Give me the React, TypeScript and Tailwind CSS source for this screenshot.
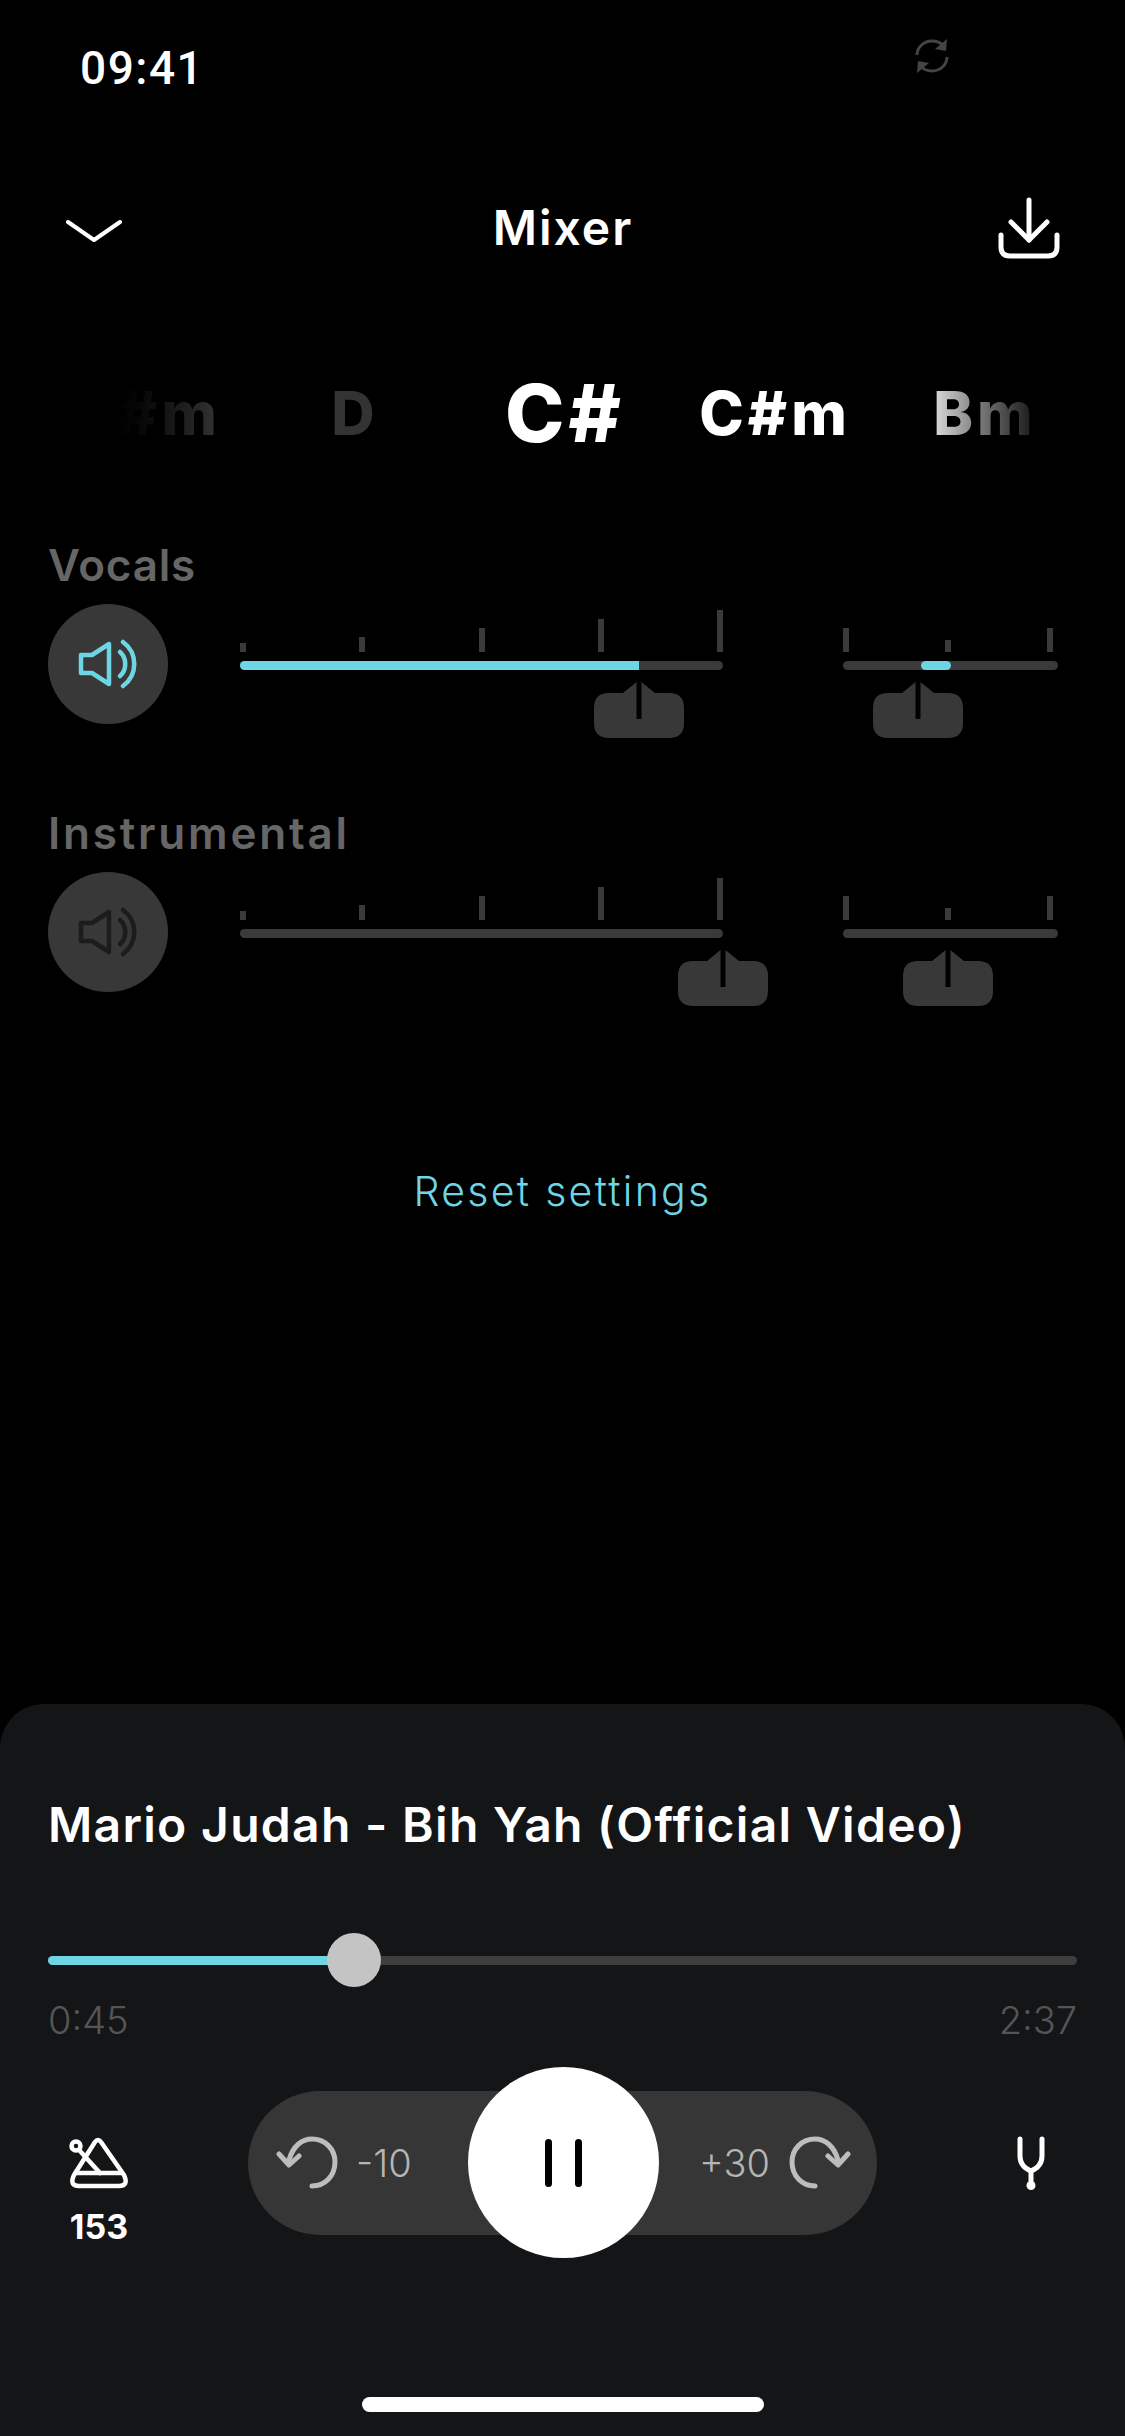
const FONT = "font-['Inter','Noto_Sans',sans-serif]";

function Speaker({ className }: { className: string }) {
  return (
    <svg viewBox="0 0 60 50" className={`w-[60px] h-[50px] ${className}`} fill="none" stroke="currentColor" strokeWidth="4.5" strokeLinecap="round" strokeLinejoin="round">
      <path d="M3 16 H14 L31 5 V45 L14 34 H3 Z" />
      <path d="M42 13 C49 19 49 31 42 37" />
      <path d="M45 3 C60 14 60 36 45 47" />
    </svg>
  );
}

function Knob({ left }: { left: number }) {
  return (
    <svg viewBox="0 0 90 58" className="absolute top-[19px] w-[90px] h-[58px]" style={{ left }}>
      <path fill="#383838" d="M15 13 H29 L45 0 L61 13 H75 Q90 13 90 28 V43 Q90 58 75 58 H15 Q0 58 0 43 V28 Q0 13 15 13 Z" />
      <rect x="42.5" y="0" width="5" height="39" fill="#000" />
    </svg>
  );
}

type FaderProps = {
  width: number;
  ticks: number[];
  endPad?: number;
  fill?: [number, number];
  knob: number;
  rounded?: boolean;
};

function Fader({ width, ticks, endPad = 0, fill, knob, rounded }: FaderProps) {
  return (
    <div style={{ width }}>
      <div className="flex items-end justify-between h-[42px] mt-[6px]" style={{ paddingRight: endPad }}>
        {ticks.map((h, i) => (
          <div key={i} className="w-[6px] bg-[#3a3a3a]" style={{ height: h }} />
        ))}
      </div>
      <div className="relative h-[9px] mt-[9px] bg-[#3a3a3a] rounded-full">
        {fill && (
          <div
            className={`absolute top-0 h-[9px] bg-[#6dd5e3] ${rounded ? "rounded-full" : "rounded-l-full"}`}
            style={{ left: fill[0], width: fill[1] - fill[0] }}
          />
        )}
        <Knob left={knob - 45} />
      </div>
    </div>
  );
}

const MAIN_TICKS = [9, 15, 24, 33, 42];
const SIDE_TICKS = [24, 12, 24];

function Channel({ label, labelClass, active, main, side }: { label: string; labelClass: string; active: boolean; main: Partial<FaderProps> & { knob: number }; side: Partial<FaderProps> & { knob: number } }) {
  return (
    <section className="h-[268px] pl-[48px]">
      <div className={`h-[56px] leading-[56px] text-[44px] font-semibold text-[#666666] ${labelClass}`}>{label}</div>
      <div className="flex items-start mt-[11px]">
        <div className="w-[120px] h-[120px] rounded-full bg-[#383838] flex items-center justify-center">
          <Speaker className={active ? "text-[#6dd5e3]" : "text-[#1c1c1c]"} />
        </div>
        <div className="ml-[72px] mr-[120px]">
          <Fader width={483} ticks={MAIN_TICKS} {...main} />
        </div>
        <Fader width={215} ticks={SIDE_TICKS} endPad={5} {...side} />
      </div>
    </section>
  );
}

function Chord({ children, className }: { children: string; className: string }) {
  return (
    <div className="w-[210px] flex justify-center">
      <span className={`inline-block font-extrabold ${className}`}>{children}</span>
    </div>
  );
}

function SkipIcon({ flip }: { flip?: boolean }) {
  return (
    <svg viewBox="0 0 62 54" className={`w-[62px] h-[54px] ${flip ? "-scale-x-100" : ""}`} fill="none" stroke="#bdbdbd" strokeWidth="5" strokeLinecap="round" strokeLinejoin="round">
      <path d="M13 24 C17 10 26 3 36 3 C49 3 59 13 59 26 C59 40 49 50 36 50" />
      <path d="M3 18 L13 29 L23 20" />
    </svg>
  );
}

export default function App() {
  return (
    <div className={`w-[1125px] h-[2436px] bg-black text-white flex flex-col overflow-hidden ${FONT}`}>
      {/* status bar */}
      <div className="h-[136px] pl-[80px] pr-[175px] flex items-center justify-between shrink-0">
        <span className="text-[46px] font-medium font-['Roboto',sans-serif] leading-none tracking-[1.5px]">09:41</span>
        <svg viewBox="0 0 36 36" className="w-[36px] h-[36px] mb-[24px]" fill="none" stroke="#444444" strokeWidth="3">
          <path d="M3 17 C3 9 10 3 18 3 C23 3 27 5 30 8" />
          <path d="M33 19 C33 27 26 33 18 33 C13 33 9 31 6 28" />
          <path d="M33 1 L32 13 L21 11 Z" fill="#444444" stroke="none" />
          <path d="M3 35 L4 23 L15 25 Z" fill="#444444" stroke="none" />
        </svg>
      </div>

      {/* header */}
      <header className="h-[184px] pl-[66px] pr-[65px] flex items-center justify-between shrink-0">
        <svg viewBox="0 0 56 24" className="w-[56px] h-[24px] mt-[6px]" fill="none" stroke="#fff" strokeWidth="4" strokeLinecap="round" strokeLinejoin="round">
          <path d="M2 3 L28 21 L54 3" />
        </svg>
        <h1 className="ml-[6px] text-[48px] font-semibold leading-none tracking-[2px]">Mixer</h1>
        <svg viewBox="0 0 62 62" className="w-[62px] h-[62px]" fill="none" stroke="#fff" strokeWidth="5" strokeLinecap="round" strokeLinejoin="round">
          <path d="M31 3 V43" />
          <path d="M13 25 L31 43 L49 25" />
          <path d="M3 38 V50 Q3 59 12 59 H50 Q59 59 59 50 V38" />
        </svg>
      </header>

      {/* chords */}
      <div className="mt-[36px] h-[114px] pl-[40px] flex items-center shrink-0">
        <Chord className="text-[60px] tracking-[4px] text-transparent bg-clip-text bg-linear-to-r from-[#000000] from-[12%] to-[#343434]">C#m</Chord>
        <Chord className="text-[60px] tracking-[4px] text-[#333333]">D</Chord>
        <Chord className="text-[80px] tracking-[4px] text-white">C#</Chord>
        <Chord className="text-[60px] tracking-[4px] text-white">C#m</Chord>
        <Chord className="text-[60px] tracking-[4px] text-transparent bg-clip-text bg-linear-to-r from-[#dddddd] to-[#151515]">Bm</Chord>
      </div>

      {/* channels */}
      <div className="mt-[67px] shrink-0">
        <Channel
          label="Vocals"
          labelClass="tracking-[0.8px]"
          active
          main={{ fill: [0, 399], knob: 399 }}
          side={{ fill: [78, 108], knob: 75, rounded: true }}
        />
        <Channel label="Instrumental" labelClass="tracking-[2.8px]" active={false} main={{ knob: 483 }} side={{ knob: 105 }} />
      </div>

      <div className="mt-[94px] text-center text-[41px] leading-[48px] font-light tracking-[2.3px] text-[#6dd5e3] shrink-0">Reset settings</div>

      {/* player sheet */}
      <div className="mt-auto h-[732px] bg-[#141516] rounded-t-[44px] shrink-0 flex flex-col">
        <div className="pt-[92px] px-[48px] text-[48px] leading-[58px] font-semibold whitespace-nowrap tracking-[1.3px]">Mario Judah - Bih Yah (Official Video)</div>

        <div className="mx-[48px] mt-[102px] relative h-[9px] bg-[#3e3e3e] rounded-full">
          <div className="absolute left-0 top-0 h-[9px] w-[290px] rounded-l-full bg-[#6dd5e3]" />
          <div className="absolute left-[279px] top-[-23px] w-[54px] h-[54px] rounded-full bg-[#c4c4c4]" />
        </div>
        <div className="mx-[48px] mt-[32px] flex justify-between text-[38px] leading-[46px] font-light text-[#555555]">
          <span>0:45</span>
          <span>2:37</span>
        </div>

        <div className="relative mt-[24px] h-[192px] flex items-start">
          <div className="w-[248px] pl-[69px] pt-[70px] flex flex-col items-start">
            <svg viewBox="0 0 60 54" className="w-[60px] h-[54px] shrink-0" fill="none" stroke="#fff" strokeWidth="4.5" strokeLinecap="round" strokeLinejoin="round">
              <circle cx="7" cy="9" r="4.5" />
              <path d="M26 5 Q29 1 32 5 L55 38 Q60 49 50 49 H10 Q0 49 5 38 Z" />
              <path d="M7 36 H53" />
              <path d="M11 14 L31 36" />
            </svg>
            <span className="mt-[18px] w-[60px] text-center text-[34px] leading-[36px] font-bold">153</span>
          </div>

          <div className="mt-[24px] w-[629px] h-[144px] rounded-full bg-[#363636] flex items-center justify-between pl-[28px] pr-[26px] text-[#b5b5b5] text-[38px] font-light">
            <div className="flex items-center gap-[18px]">
              <SkipIcon />
              <span>-10</span>
            </div>
            <div className="flex items-center gap-[19px]">
              <span>+30</span>
              <SkipIcon flip />
            </div>
          </div>

          {/* pause overlays the pill */}
          <div className="absolute left-[468px] top-0 w-[191px] h-[191px] rounded-full bg-white flex items-center justify-center gap-[23px]">
            <div className="w-[7px] h-[48px] rounded-full bg-black" />
            <div className="w-[7px] h-[48px] rounded-full bg-black" />
          </div>

          <svg viewBox="0 0 28 54" className="ml-[140px] mt-[69px] w-[28px] h-[54px]" fill="none" stroke="#fff" strokeWidth="5" strokeLinecap="round">
            <path d="M3 3 V20 C3 29 9 33 14 35 C19 33 25 29 25 20 V3" />
            <path d="M14 35 V45" />
            <circle cx="14" cy="49.5" r="4.5" fill="#fff" stroke="none" />
          </svg>
        </div>

        <div className="mt-auto mb-[24px] mx-auto w-[402px] h-[15px] rounded-full bg-white" />
      </div>
    </div>
  );
}
